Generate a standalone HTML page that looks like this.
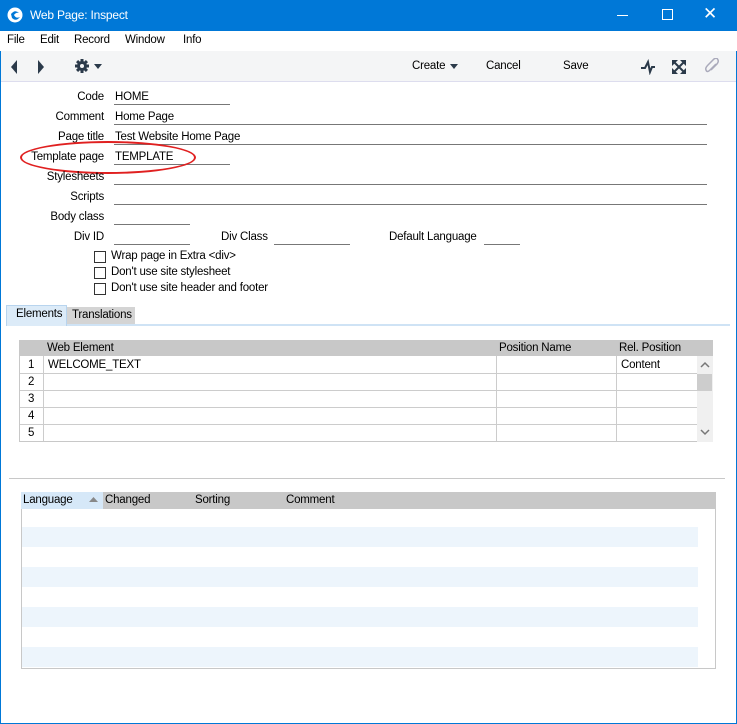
<!DOCTYPE html>
<html><head><style>
*{box-sizing:border-box}
body{margin:0;width:737px;height:724px;overflow:hidden;font-family:"Liberation Sans",sans-serif;font-size:11.5px;letter-spacing:-0.2px;color:#000;background:#fff;position:relative}
.a{position:absolute}
.lbl{position:absolute;text-align:right;width:104px;left:0}
.fld{position:absolute;border-bottom:1px solid #777;height:15px;padding-left:1px;line-height:14px}
.cb{position:absolute;width:12px;height:12px;border:1px solid #333;background:#fff}
</style></head><body>
<div class="a" style="left:0;top:0;width:737px;height:31px;background:#0078d7"></div>
<div class="a" style="left:0;top:0;width:1px;height:724px;background:#0078d7"></div>
<div class="a" style="right:0;top:0;width:1px;height:724px;background:#0078d7"></div>
<div class="a" style="left:0;bottom:0;width:737px;height:1px;background:#0078d7"></div>
<svg class="a" style="left:7px;top:7px" width="16" height="16"><circle cx="8" cy="8" r="7.5" fill="#fff"/><path d="M4 7 Q8 2 12 6 Q9 5 7 8 Q9 12 13 10 Q9 15 5 11Z" fill="#0078d7"/></svg>
<div class="a" style="left:30px;top:8px;color:#fff;font-size:12px">Web Page: Inspect</div>
<div class="a" style="left:617px;top:15px;width:11px;height:1px;background:#fff"></div>
<div class="a" style="left:662px;top:9px;width:11px;height:11px;border:1px solid #fff"></div>
<div class="a" style="left:703px;top:4px;color:#fff;font-size:17px">✕</div>
<div class="a" style="left:0;top:31px;width:737px;height:20px;background:#fff"></div>
<div class="a" style="left:7px;top:34px">File</div><div class="a" style="left:40px;top:34px">Edit</div><div class="a" style="left:74px;top:34px">Record</div><div class="a" style="left:125px;top:34px">Window</div><div class="a" style="left:183px;top:34px">Info</div>
<div class="a" style="left:1px;top:51px;width:735px;height:31px;background:#f4f5f6;border-bottom:1px solid #dde"></div>
<svg class="a" style="left:10px;top:59px" width="40" height="16"><path d="M7 1 L1 8 L7 15Z" fill="#2b3a4a"/><path d="M28 1 L34 8 L28 15Z" fill="#2b3a4a"/></svg>
<svg class="a" style="left:74px;top:58px" width="32" height="16"><g fill="#2b3a4a"><circle cx="8" cy="8" r="5"/><rect x="6.5" y="1" width="3" height="14"/><rect x="1" y="6.5" width="14" height="3"/><rect x="6.5" y="1" width="3" height="14" transform="rotate(45 8 8)"/><rect x="6.5" y="1" width="3" height="14" transform="rotate(-45 8 8)"/></g><circle cx="8" cy="8" r="2" fill="#f4f5f6"/><path d="M20 6 L28 6 L24 11Z" fill="#2b3a4a"/></svg>
<div class="a" style="left:412px;top:60px">Create</div><svg class="a" style="left:450px;top:64px" width="9" height="6"><path d="M0 0H8L4 5Z" fill="#2b3a4a"/></svg>
<div class="a" style="left:486px;top:60px">Cancel</div>
<div class="a" style="left:563px;top:60px">Save</div>
<svg class="a" style="left:640px;top:59px" width="16" height="16"><path d="M1 9 L5 9 L8 3 L10 13 L12 8 L15 8" stroke="#2b3a4a" stroke-width="2" fill="none"/></svg>
<svg class="a" style="left:671px;top:59px" width="16" height="16"><g fill="#2b3a4a"><path d="M1 1H7L1 7Z"/><path d="M15 1H9L15 7Z"/><path d="M1 15H7L1 9Z"/><path d="M15 15H9L15 9Z"/></g><path d="M3 3L13 13M13 3L3 13" stroke="#2b3a4a" stroke-width="2"/></svg>
<svg class="a" style="left:704px;top:58px" width="16" height="18"><path d="M12 6 L6 12 Q3 15 2 12 Q1 10 4 7 L10 1 Q13 -1 14 2 Q15 4 12 7 L7 12" stroke="#aab" stroke-width="1.5" fill="none"/></svg>

<div class="lbl" style="top:91px">Code</div><div class="fld" style="left:114px;top:90px;width:116px">HOME</div>
<div class="lbl" style="top:111px">Comment</div><div class="fld" style="left:114px;top:110px;width:593px">Home Page</div>
<div class="lbl" style="top:131px">Page title</div><div class="fld" style="left:114px;top:130px;width:593px">Test Website Home Page</div>
<div class="lbl" style="top:151px">Template page</div><div class="fld" style="left:114px;top:150px;width:116px">TEMPLATE</div>
<div class="a" style="left:20px;top:141px;width:176px;height:33px;border:2px solid #e02020;border-radius:50%"></div>
<div class="lbl" style="top:171px">Stylesheets</div><div class="fld" style="left:114px;top:170px;width:593px"></div>
<div class="lbl" style="top:191px">Scripts</div><div class="fld" style="left:114px;top:190px;width:593px"></div>
<div class="lbl" style="top:211px">Body class</div><div class="fld" style="left:114px;top:210px;width:76px"></div>
<div class="lbl" style="top:231px">Div ID</div><div class="fld" style="left:114px;top:230px;width:76px"></div>
<div class="a" style="left:221px;top:231px">Div Class</div><div class="fld" style="left:274px;top:230px;width:76px"></div>
<div class="a" style="left:389px;top:231px">Default Language</div><div class="fld" style="left:484px;top:230px;width:36px"></div>
<div class="cb" style="left:94px;top:251px"></div><div class="a" style="left:111px;top:250px">Wrap page in Extra &lt;div&gt;</div>
<div class="cb" style="left:94px;top:267px"></div><div class="a" style="left:111px;top:266px">Don't use site stylesheet</div>
<div class="cb" style="left:94px;top:283px"></div><div class="a" style="left:111px;top:282px">Don't use site header and footer</div>

<div class="a" style="left:6px;top:324px;width:724px;height:2px;background:#cfe3f5"></div>
<div class="a" style="left:6px;top:305px;width:61px;height:21px;background:#dcebf8;border:1px solid #b8d4ee;border-bottom:none;padding:2px 0 0 9px">Elements</div>
<div class="a" style="left:67px;top:307px;width:68px;height:17px;background:#d4d4d4;padding:2px 0 0 5px">Translations</div>

<div class="a" style="left:19px;top:340px;width:694px;height:102px;background:#fff;border:1px solid #c8c8c8"></div>
<div class="a" style="left:19px;top:340px;width:694px;height:16px;background:#c8c8c8"></div>
<div class="a" style="left:47px;top:342px">Web Element</div><div class="a" style="left:499px;top:342px">Position Name</div><div class="a" style="left:619px;top:342px">Rel. Position</div>
<div class="a" style="left:697px;top:356px;width:16px;height:86px;background:#f0f0f0"></div>
<div class="a" style="left:697px;top:374px;width:15px;height:17px;background:#cdcdcd"></div>
<svg class="a" style="left:700px;top:361px" width="10" height="8"><path d="M1 6L5 2L9 6" stroke="#777" stroke-width="1.5" fill="none"/></svg>
<svg class="a" style="left:700px;top:428px" width="10" height="8"><path d="M1 2L5 6L9 2" stroke="#777" stroke-width="1.5" fill="none"/></svg>
<div class="a" style="left:43px;top:356px;width:1px;height:85px;background:#ccc"></div>
<div class="a" style="left:496px;top:356px;width:1px;height:85px;background:#ccc"></div>
<div class="a" style="left:616px;top:356px;width:1px;height:85px;background:#ccc"></div>
<div class="a" style="left:20px;top:373px;width:677px;height:1px;background:#ccc"></div>
<div class="a" style="left:20px;top:390px;width:677px;height:1px;background:#ccc"></div>
<div class="a" style="left:20px;top:407px;width:677px;height:1px;background:#ccc"></div>
<div class="a" style="left:20px;top:424px;width:677px;height:1px;background:#ccc"></div>
<div class="a" style="left:28px;top:359px">1</div><div class="a" style="left:28px;top:376px">2</div><div class="a" style="left:28px;top:393px">3</div><div class="a" style="left:28px;top:410px">4</div><div class="a" style="left:28px;top:427px">5</div>
<div class="a" style="left:48px;top:359px">WELCOME_TEXT</div><div class="a" style="left:621px;top:359px">Content</div>

<div class="a" style="left:9px;top:478px;width:716px;height:1px;background:#c8c8c8"></div>
<div class="a" style="left:21px;top:492px;width:695px;height:177px;background:#fff;border:1px solid #c8c8c8"></div>
<div class="a" style="left:21px;top:492px;width:695px;height:17px;background:#c8c8c8"></div>
<div class="a" style="left:21px;top:492px;width:82px;height:17px;background:#d6e8f8"></div>
<div class="a" style="left:23px;top:494px">Language</div><svg class="a" style="left:89px;top:497px" width="10" height="6"><path d="M0 5H9L4.5 0Z" fill="#888"/></svg>
<div class="a" style="left:105px;top:494px">Changed</div><div class="a" style="left:195px;top:494px">Sorting</div><div class="a" style="left:286px;top:494px">Comment</div>
<div class="a" style="left:22px;top:527px;width:676px;height:20px;background:#edf5fc"></div>
<div class="a" style="left:22px;top:567px;width:676px;height:20px;background:#edf5fc"></div>
<div class="a" style="left:22px;top:607px;width:676px;height:20px;background:#edf5fc"></div>
<div class="a" style="left:22px;top:647px;width:676px;height:20px;background:#edf5fc"></div>
</body></html>
